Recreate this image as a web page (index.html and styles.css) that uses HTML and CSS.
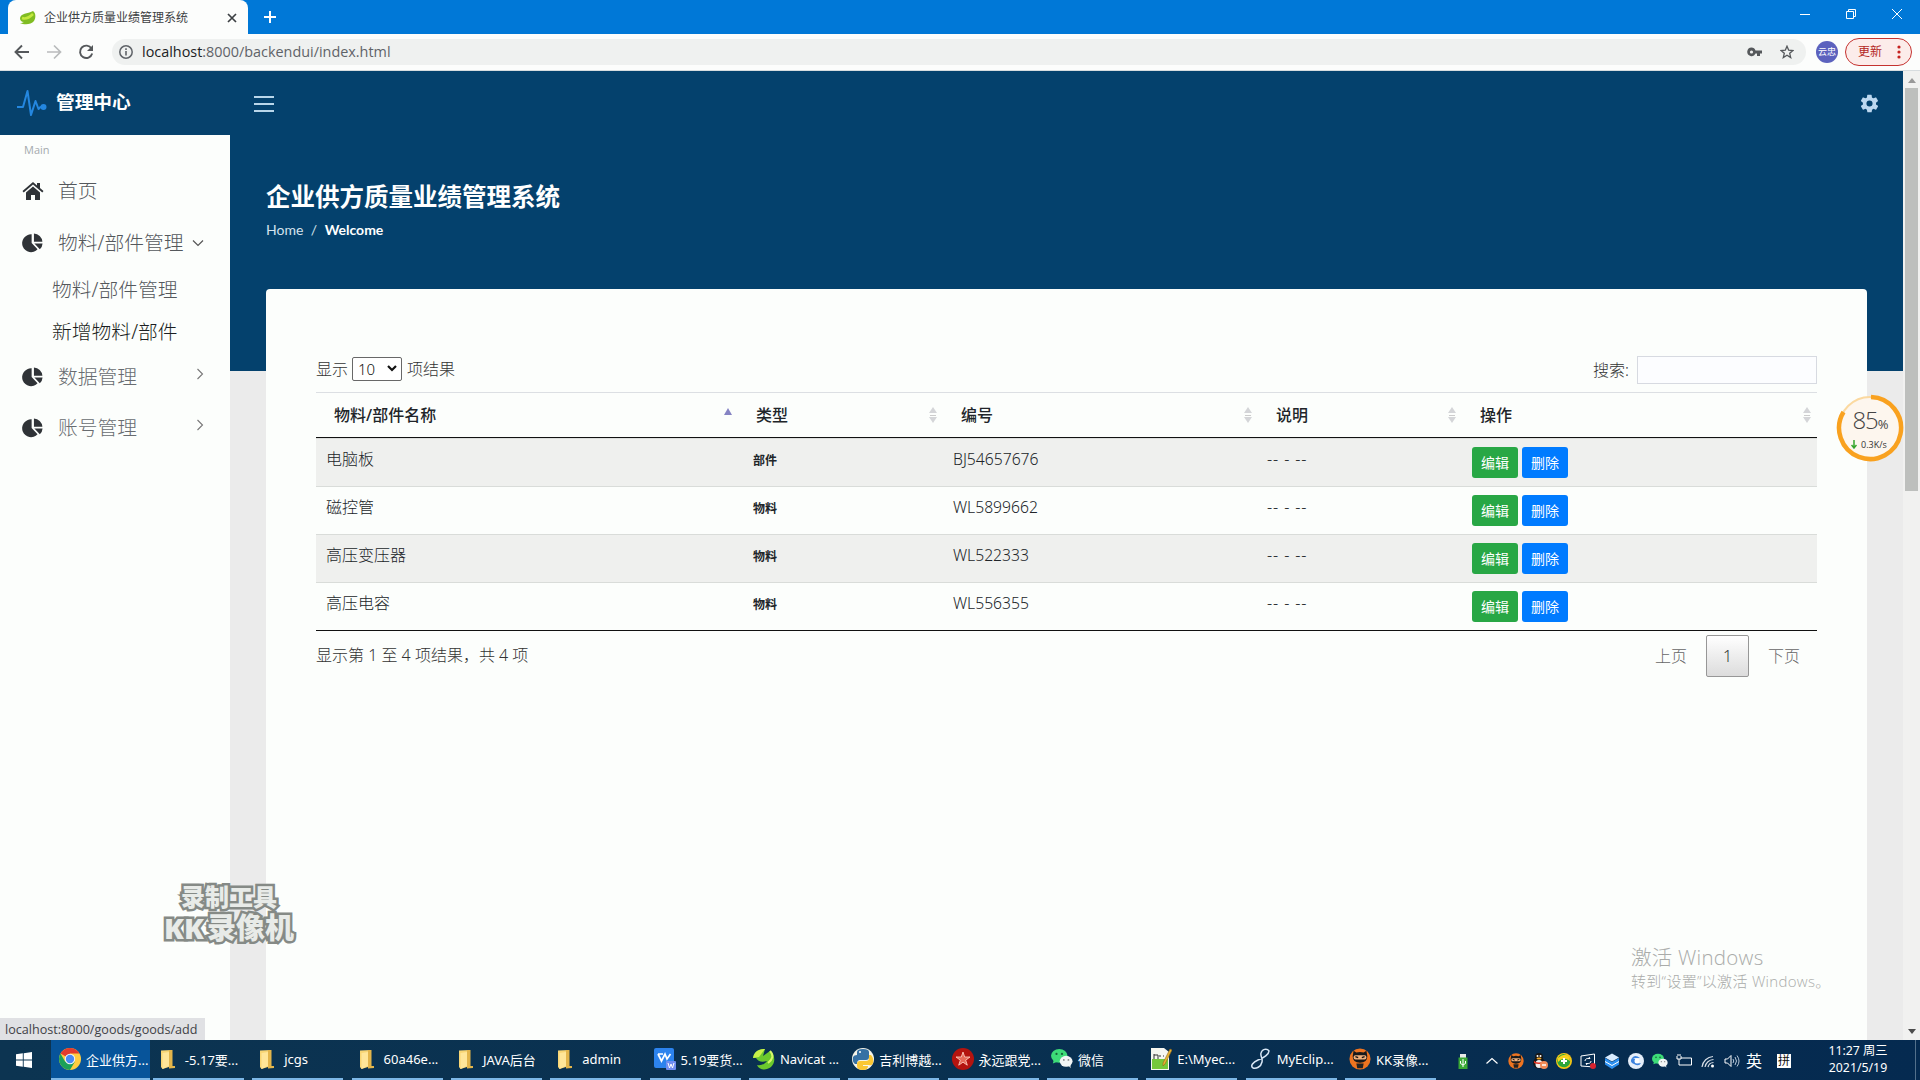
FILE: index.html
```html
<!DOCTYPE html>
<html lang="zh-CN">
<head>
<meta charset="utf-8">
<title>企业供方质量业绩管理系统</title>
<link rel="stylesheet" href="styles.css">
</head>
<body>
<svg class="defs" width="0" height="0">
  <symbol id="pie" viewBox="0 0 22 22"><path d="M9.5 1.5V11l6.5 7A9.8 9.8 0 1 1 9.5 1.500Z"/><path d="M12 .6A9.600 9.600 0 0 1 21.300 9.500H12Z"/><path d="M12.500 11.500H21.500A9.500 9.500 0 0 1 18.500 18Z"/></symbol>
  <symbol id="right" viewBox="0 0 12 12"><path d="M3.500 1 8.500 6 3.500 11" fill="none" stroke="#777" stroke-width="1.100"/></symbol>
  <symbol id="folder" viewBox="0 0 20 22"><path d="M2 2.500 13 2V18L3.500 21 2 19Z" fill="#f8d675"/><path d="M10 2H13.500V18H16V20L10 20.500Z" fill="#e3b54b"/><path d="M3.500 5 10 4V18L3.500 21Z" fill="#ffe699"/></symbol>
  <symbol id="wechat" viewBox="0 0 24 24"><ellipse cx="9" cy="8.500" rx="9" ry="7.500" fill="#3ddc78"/><path d="m3 13-1 4 5-2Z" fill="#3ddc78"/><circle cx="6" cy="6.500" r="1.200" fill="#17643a"/><circle cx="12" cy="6.500" r="1.200" fill="#17643a"/><ellipse cx="16.500" cy="14.500" rx="7" ry="6" fill="#f2f5f5"/><path d="m19 19 2.500 3-.5-4Z" fill="#f2f5f5"/><circle cx="14" cy="13" r="1" fill="#888"/><circle cx="19" cy="13" r="1" fill="#888"/></symbol>
  <symbol id="ninja" viewBox="0 0 24 24"><circle cx="12" cy="12" r="11.500" fill="#ee7420"/><path d="M5 3l3 2q4-1.500 8 0l3-2 1 6q0 7-8 7T4 9Z" fill="#17191b"/><rect x="5" y="8" width="14" height="4.500" rx="2" fill="#f0b07c"/><path d="m7 9.500 3 1M17 9.500l-3 1" stroke="#111" stroke-width="1.500"/><path d="M8 17h8l-1 5H9Z" fill="#222"/></symbol>
</svg>

<header class="tabstrip">
  <div class="tab">
    <svg width="16" height="16" viewBox="0 0 16 16"><path d="M0 8C1 3 7 4 13 1c3 2 3 7 1 10-3 4-10 4-14 2 2 0 3-.5 4-1-3 0-4-2-4-4Z" fill="#80bc22"/><path d="M2 8c4 1.500 8-1 11-4" stroke="#c3e83d" stroke-width="2.500" fill="none"/></svg>
    <span class="tab-title">企业供方质量业绩管理系统</span>
    <svg class="tab-close" width="10" height="10" viewBox="0 0 10 10"><path d="m1 1 8 8M9 1 1 9" stroke="#3c4043" stroke-width="1.700"/></svg>
  </div>
  <svg class="newtab" width="12" height="12" viewBox="0 0 12 12"><path d="M6 0v12M0 6h12" stroke="#fff" stroke-width="2"/></svg>
  <div class="winctl">
    <svg width="12" height="12" viewBox="0 0 12 12"><path d="M1 6.500h10" stroke="#fff"/></svg>
    <svg width="12" height="12" viewBox="0 0 12 12"><path d="M1.500 3.500h7v7h-7ZM3.500 3.500v-2h7v7h-2" fill="none" stroke="#fff"/></svg>
    <svg width="12" height="12" viewBox="0 0 12 12"><path d="m1 1 10 10M11 1 1 11" stroke="#fff"/></svg>
  </div>
</header>

<div class="toolbar">
  <div class="nav">
    <svg width="16" height="16" viewBox="0 0 16 16"><path d="M15 8H2M8 1.500 1.500 8 8 14.500" fill="none" stroke="#55585b" stroke-width="1.900"/></svg>
    <svg width="16" height="16" viewBox="0 0 16 16"><path d="M1 8h13M8 1.500 14.500 8 8 14.500" fill="none" stroke="#b9bbbc" stroke-width="1.700"/></svg>
    <svg width="16" height="16" viewBox="0 0 16 16"><path d="M13.500 4.500A6.200 6.200 0 1 0 14.200 9.500" fill="none" stroke="#55585b" stroke-width="1.900"/><path d="M15 1v6H9Z" fill="#55585b"/></svg>
  </div>
  <div class="omnibox">
    <svg width="14" height="14" viewBox="0 0 14 14"><circle cx="7" cy="7" r="6.200" fill="none" stroke="#5f6368" stroke-width="1.500"/><path d="M7 6v4.500M7 3.300v1.600" stroke="#5f6368" stroke-width="1.600"/></svg>
    <span class="url"><b>localhost</b>:8000/backendui/index.html</span>
    <svg class="key" width="15" height="10" viewBox="0 0 15 10"><path d="M4.500.5a4.300 4.300 0 1 0 4 6H10v2.500h3V6.500h2v-3H8.500a4.300 4.300 0 0 0-4-3Z" fill="#55585b"/><circle cx="4.500" cy="5" r="1.600" fill="#eff0ef"/></svg>
    <svg class="star" width="14" height="14" viewBox="0 0 14 14"><path d="m7 1.200 1.700 4 4.200.3-3.200 2.800 1 4.200L7 10.200l-3.700 2.300 1-4.200L1.100 5.500l4.200-.3Z" fill="none" stroke="#55585b" stroke-width="1.300"/></svg>
  </div>
  <span class="avatar">云忠</span>
  <div class="update"><span>更新</span><svg width="4" height="14" viewBox="0 0 4 14"><g fill="#c5221f"><circle cx="2" cy="2" r="1.600"/><circle cx="2" cy="7" r="1.600"/><circle cx="2" cy="12" r="1.600"/></g></svg></div>
</div>

<div class="viewport">
  <aside class="sidebar">
    <div class="brand">
      <svg width="31" height="28" viewBox="0 0 31 28"><path d="M1 18H7L11.500 2 15 26 19.500 12 22.500 20 25 17.500" fill="none" stroke="#2487e0" stroke-width="2" stroke-linejoin="round"/><circle cx="27.500" cy="18" r="3" fill="#2487e0"/></svg>
      <strong>管理中心</strong>
    </div>
    <div class="menu-label">Main</div>
    <ul class="menu">
      <li><svg class="micon" viewBox="0 0 22 20"><path d="M.5 10 11 1l4 3.400V2h3v5l3.500 3-1.200 1.400L11 3.600 1.700 11.400Z"/><path d="M4 11.500 11 5.500l7 6V19h-5v-5H9v5H4Z"/></svg><span>首页</span></li>
      <li><svg class="micon"><use href="#pie"/></svg><span>物料/部件管理</span><svg class="down" width="12" height="12" viewBox="0 0 12 12"><path d="m1 3.500 5 5 5-5" fill="none" stroke="#555" stroke-width="1.200"/></svg></li>
    </ul>
    <ul class="submenu">
      <li>物料/部件管理</li>
      <li class="hover">新增物料/部件</li>
    </ul>
    <ul class="menu dim">
      <li><svg class="micon"><use href="#pie"/></svg><span>数据管理</span><svg class="right" width="12" height="12"><use href="#right"/></svg></li>
      <li><svg class="micon"><use href="#pie"/></svg><span>账号管理</span><svg class="right" width="12" height="12"><use href="#right"/></svg></li>
    </ul>
  </aside>

  <main class="content">
    <div class="topbar">
      <span class="burger"><i></i><i></i><i></i></span>
      <svg width="21" height="21" viewBox="0 0 24 24"><path d="M19.400 13a7.500 7.500 0 0 0 0-2l2.100-1.700a.5.5 0 0 0 .1-.6l-2-3.500a.5.5 0 0 0-.6-.2l-2.500 1a7.300 7.300 0 0 0-1.700-1L14.400 2.400a.5.5 0 0 0-.5-.4h-4a.5.5 0 0 0-.5.400L9.100 5a7.700 7.700 0 0 0-1.700 1l-2.500-1a.5.5 0 0 0-.6.200l-2 3.500a.5.5 0 0 0 .1.600L4.500 11a7.900 7.900 0 0 0 0 2l-2.100 1.700a.5.5 0 0 0-.1.600l2 3.500c.1.200.4.300.6.200l2.500-1a7.300 7.300 0 0 0 1.700 1l.4 2.600c0 .2.200.4.500.4h4c.2 0 .5-.2.500-.4l.4-2.600a7.700 7.700 0 0 0 1.700-1l2.500 1c.2.100.5 0 .6-.2l2-3.500a.5.500 0 0 0-.1-.6ZM12 15.500a3.500 3.500 0 1 1 0-7 3.500 3.500 0 0 1 0 7Z" fill="#bdd8f0"/></svg>
    </div>
    <h1>企业供方质量业绩管理系统</h1>
    <div class="crumbs"><span>Home</span><span>/</span><b>Welcome</b></div>
    <section class="card">
      <div class="controls">
        <span>显示</span>
        <span class="select">10<svg width="10" height="7" viewBox="0 0 10 7"><path d="m1 1 4 4 4-4" fill="none" stroke="#111" stroke-width="2.200"/></svg></span>
        <span>项结果</span>
        <label class="search">搜索:<input type="text"></label>
      </div>
      <table>
        <colgroup><col class="c1"><col class="c2"><col class="c3"><col class="c4"><col class="c5"></colgroup>
        <thead><tr>
          <th class="asc"><div>物料/部件名称<i class="sort"></i></div></th>
          <th><div>类型<i class="sort"></i></div></th>
          <th><div>编号<i class="sort"></i></div></th>
          <th><div>说明<i class="sort"></i></div></th>
          <th><div>操作<i class="sort"></i></div></th>
        </tr></thead>
        <tbody>
          <tr><td>电脑板</td><td><b class="badge">部件</b></td><td>BJ54657676</td><td class="note">-- - --</td><td><div class="actions"><a class="btn edit">编辑</a><a class="btn del">删除</a></div></td></tr>
          <tr><td>磁控管</td><td><b class="badge">物料</b></td><td>WL5899662</td><td class="note">-- - --</td><td><div class="actions"><a class="btn edit">编辑</a><a class="btn del">删除</a></div></td></tr>
          <tr><td>高压变压器</td><td><b class="badge">物料</b></td><td>WL522333</td><td class="note">-- - --</td><td><div class="actions"><a class="btn edit">编辑</a><a class="btn del">删除</a></div></td></tr>
          <tr><td>高压电容</td><td><b class="badge">物料</b></td><td>WL556355</td><td class="note">-- - --</td><td><div class="actions"><a class="btn edit">编辑</a><a class="btn del">删除</a></div></td></tr>
        </tbody>
      </table>
      <div class="table-foot">
        <span class="info">显示第 1 至 4 项结果，共 4 项</span>
        <div class="pager"><span>上页</span><span class="page">1</span><span>下页</span></div>
      </div>
    </section>
  </main>

  <div class="scrollbar"><i class="up"></i><div class="thumb"></div><i class="dn"></i></div>

  <div class="status">localhost:8000/goods/goods/add</div>
  <div class="recorder"><div class="r1">录制工具</div><div class="r2"><span>KK</span><span>录像机</span></div></div>
  <div class="activate"><div class="a1">激活 Windows</div><div class="a2">转到“设置”以激活 Windows。</div></div>
  <div class="gauge">
    <svg width="68" height="68" viewBox="0 0 68 68"><circle cx="34" cy="34" r="31" fill="#fdf6ee" stroke="#fbd9a0" stroke-width="2"/><path d="M35 3A31 31 0 1 1 7.500 18" fill="none" stroke="#f9a11f" stroke-width="4.500"/></svg>
    <div class="pct">85<small>%</small></div>
    <div class="rate"><svg width="6" height="9" viewBox="0 0 6 9"><path d="M3 0v8M.5 5 3 8l2.500-3" fill="none" stroke="#35a52c" stroke-width="1.500"/></svg>0.3K/s</div>
  </div>
</div>

<footer class="taskbar">
  <div class="start"><svg width="16" height="16" viewBox="0 0 16 16"><path d="M0 2.300 6.800 1.300V7.500H0ZM7.700 1.200 16 0V7.500H7.700ZM0 8.400H6.800V14.700L0 13.700ZM7.700 8.400H16V16L7.700 14.800Z" fill="#fff"/></svg></div>
  <div class="tasks">
    <div class="task big active"><svg viewBox="0 0 22 22"><circle cx="11" cy="11" r="11" fill="#ffcd40"/><path d="M11 11 1.500 5.500A11 11 0 0 1 20.500 5.500H11Z" fill="#e33b2e"/><path d="M1.500 5.500A11 11 0 0 0 11 22l4.800-8.200L11 11 6.200 13.800Z" fill="#1ba05a"/><circle cx="11" cy="11" r="5.200" fill="#f5f5f5"/><circle cx="11" cy="11" r="4.200" fill="#4a8af4"/></svg><span>企业供方...</span></div>
    <div class="task"><svg><use href="#folder"/></svg><span>-5.17要...</span></div>
    <div class="task"><svg><use href="#folder"/></svg><span>jcgs</span></div>
    <div class="task"><svg><use href="#folder"/></svg><span>60a46e...</span></div>
    <div class="task"><svg><use href="#folder"/></svg><span>JAVA后台</span></div>
    <div class="task"><svg><use href="#folder"/></svg><span>admin</span></div>
    <div class="task big"><svg viewBox="0 0 22 22"><rect width="20" height="20" rx="2" fill="#2c83ee"/><path d="m4 6 3.500 7L11 6l2 5 3.500-5M4 6h5" fill="none" stroke="#fff" stroke-width="1.700"/><rect x="12" y="13" width="10" height="9" rx="1" fill="#6f8df0"/><path d="m14 15 1.500 5 1.500-4 1.500 4 1.500-5" fill="none" stroke="#fff"/></svg><span>5.19要货...</span></div>
    <div class="task big"><svg viewBox="0 0 22 22"><path d="M0 10C1 4 5 1 12 1l-2 7 7-5c5 4 6 11 1 16-5 4-12 3-14-2 4 1 8-1 10-4-6 2-9 0-11-3Z" fill="#6cc92d"/><path d="M12 1 6 9l-6 1C1 4 5 1 12 1Z" fill="#c8f04a"/><path d="M17 3c4 4 3 8-2 12" stroke="#d5f769" stroke-width="2" fill="none"/></svg><span>Navicat ...</span></div>
    <div class="task big"><svg viewBox="0 0 22 22"><circle cx="11" cy="11" r="11" fill="#f6f4e8"/><path d="M5 7V4q0-3 6-3t6 3v5q0 3-3 3H8q-3 0-3 4H3Q0 14 1 9q1-2 4-2h6" fill="#3671a4"/><path d="M17 10V7h2q3 3 2 8-1 3-4 2h-6v1h5q0 4-5 4-6 0-6-4v-2q0-3 3-3h6q3 0 3-3Z" fill="#fac733"/><circle cx="8" cy="4" r="1" fill="#fff"/></svg><span>吉利博越...</span></div>
    <div class="task big"><svg viewBox="0 0 22 22"><circle cx="11" cy="11" r="11" fill="#b4140f"/><path d="m11 4 1.700 5H18l-4.300 3.200 1.600 5L11 14.200 6.700 17.200l1.600-5L4 9h5.300Z" fill="#e76a58" stroke="#ffd5c8" stroke-width=".8"/></svg><span>永远跟党...</span></div>
    <div class="task big"><svg><use href="#wechat"/></svg><span>微信</span></div>
    <div class="task big"><svg viewBox="0 0 22 22"><path d="M1 0h13l5 4v18H1Z" fill="#f5f6f0"/><path d="M2 11h16v10H2Z" fill="#75c83c"/><path d="M4 6v5M4 7h4v4M9 8h2M13 8h1" stroke="#333" fill="none"/><path d="m20 1 2 1-7 14-2 2V15Z" fill="#e7b534" stroke="#946516" stroke-width=".6"/></svg><span>E:\Myec...</span></div>
    <div class="task big"><svg viewBox="0 0 22 22"><path d="M19 3C17 0 12 1 11 5c-1 3 2 5 1 9-1 5-6 7-9 6-3-2 0-6 5-8 6-2 11-6 11-9Z" fill="none" stroke="#d8e6f5" stroke-width="1.500"/></svg><span>MyEclip...</span></div>
    <div class="task big"><svg><use href="#ninja"/></svg><span>KK录像...</span></div>
  </div>
  <div class="tray">
    <svg viewBox="0 0 16 16"><path d="M5 1h6v4H5Z" fill="#e8eae8"/><path d="M3.500 4.500h9V16h-9Z" fill="#3aa935"/><path d="M8 6v8M5.500 8v2.500L8 12l2.500-1.500V8" stroke="#fff" fill="none"/></svg>
    <svg class="w5" viewBox="0 0 16 16"><path d="m2.500 10.500 5.500-5 5.500 5" stroke="#fff" stroke-width="1.200" fill="none"/></svg>
    <svg viewBox="0 0 24 24"><use href="#ninja"/></svg>
    <svg viewBox="0 0 16 16"><ellipse cx="7" cy="10" rx="6" ry="5.500" fill="#171717"/><ellipse cx="7" cy="4" rx="4" ry="4" fill="#171717"/><ellipse cx="7" cy="11" rx="3.500" ry="4" fill="#f0eeee"/><path d="M2 8q5 3 10 0v2q-5 2-10 0Z" fill="#e43121"/><ellipse cx="7" cy="5.500" rx="2.500" ry="1" fill="#f5a623"/><circle cx="5.500" cy="3" r="1" fill="#fff"/><circle cx="8.500" cy="3" r="1" fill="#fff"/><circle cx="12" cy="12" r="4" fill="#f08a56"/><path d="M10 12h4" stroke="#fff" stroke-width="1.500"/></svg>
    <svg viewBox="0 0 16 16"><circle cx="8" cy="8" r="8" fill="#f5c515"/><path d="M8 1a7 7 0 0 0-6 10q3 4 8 3 5-2 4-7Q12 2 8 1Z" fill="#2da63a"/><path d="M2 5q7-6 11-1l1 4q-7-5-12 1Z" fill="#f6d21d"/><path d="M8 5v6M5 8h6" stroke="#fff" stroke-width="2"/></svg>
    <svg viewBox="0 0 16 16"><path d="M1 3 14.500 1v13L1 13Z" fill="none" stroke="#fff"/><path d="M5 8q0-3 5-2.500L9 4M11 8q0 3-5 2.500L7 12" fill="none" stroke="#fff"/><circle cx="13" cy="13" r="3" fill="#d8232f"/></svg>
    <svg viewBox="0 0 16 16"><path d="m1 4.500 7-4 7 4-7 4Z" fill="#d9ecff"/><path d="m1 5 7 4 7-4v6.500L8 16l-7-4.500Z" fill="#2b8ff0"/><path d="m1 8.500 7 4 7-4" fill="none" stroke="#fff"/></svg>
    <svg viewBox="0 0 16 16"><circle cx="8" cy="8" r="8" fill="#e5eefa"/><path d="M12 5Q7 1 4 5t2 6q5 3 7-1-4 1-5-1 0-4-4-4" fill="#3d83df"/><circle cx="9" cy="8" r="2.500" fill="#fff"/></svg>
    <svg viewBox="0 0 24 24"><use href="#wechat"/></svg>
    <svg viewBox="0 0 16 16"><path d="M5 5h10.500v7H5M1 3v3h4V3M2 3V1M4 3V1M3 6v6h2" fill="none" stroke="#fff"/></svg>
    <svg viewBox="0 0 16 16"><path d="M2 14A12 12 0 0 1 13 3.500M5 14a9 9 0 0 1 8.500-7.500M8 14a6 6 0 0 1 5.500-4.500" fill="none" stroke="#d6dde6" stroke-width="1.200"/><circle cx="12.500" cy="13" r="1.500" fill="#fff"/></svg>
    <svg viewBox="0 0 16 16"><path d="M1 6h2.500L7 2.500v11L3.500 10H1Z" fill="none" stroke="#fff"/><path d="M9 6q1.500 2 0 4M11 4q3 4 0 8M13 2.500q4 5.500 0 11" fill="none" stroke="#b9c8d8"/></svg>
    <span class="ime">英</span><span class="pin">拼</span>
  </div>
  <div class="clock"><div>11:27 周三</div><div>2021/5/19</div></div>
  <i class="peek"></i>
</footer>
</body>
</html>
```
FILE: styles.css
```css
* { box-sizing: border-box; }
body { margin: 0; width: 1920px; height: 1080px; overflow: hidden; display: flex; flex-direction: column; font-family: "Noto Sans", "Noto Sans CJK SC", sans-serif; font-weight: 300; color: #212529; background: #fcfefc; }
svg { display: block; flex: none; }
.defs { position: absolute; }
ul { margin: 0; padding: 0; list-style: none; }
i { font-style: normal; }
b, strong { font-weight: 700; }

/* browser chrome */
.tabstrip { height: 34px; flex: none; display: flex; align-items: center; background: #0078d7; padding-left: 8px; }
.tab { width: 240px; height: 34px; background: #fcfdfc; border-radius: 8px 8px 0 0; display: flex; align-items: center; padding: 2px 11px 0 12px; gap: 8px; }
.tab-title { font-size: 12px; line-height: 20px; font-weight: 400; color: #3c4043; white-space: nowrap; flex: 1; }
.newtab { margin-left: 16px; }
.winctl { margin-left: auto; display: flex; gap: 34px; padding-right: 17px; margin-top: -6px; }
.toolbar { height: 37px; flex: none; display: flex; align-items: center; border-bottom: 1px solid #d7dcdf; padding: 0 8px 0 14px; background: #fcfdfc; }
.nav { display: flex; gap: 16px; width: 98px; }
.omnibox { width: 1694px; height: 26px; border-radius: 13px; background: #eff1f0; display: flex; align-items: center; padding: 0 12px 0 7px; }
.url { font-size: 14.400px; line-height: 24px; margin-left: 9px; color: #5f6368; white-space: nowrap; font-weight: 400; font-family: "Open Sans", sans-serif; }
.url b { color: #202124; font-weight: 400; }
.key { margin-left: auto; }
.star { margin-left: 18px; }
.avatar { width: 22px; height: 22px; border-radius: 50%; background: #5c62be; color: #fff; font-size: 9px; font-weight: 400; line-height: 22px; text-align: center; margin-left: 10px; flex: none; }
.update { width: 67px; height: 28px; margin-left: 7px; border: 1px solid #c5322f; border-radius: 14px; background: #fcecea; color: #b3261e; font-size: 12px; font-weight: 400; line-height: 26px; display: flex; align-items: center; padding: 0 10px 0 12px; justify-content: space-between; }

/* page */
.viewport { height: 969px; flex: none; display: flex; position: relative; }
.sidebar { width: 230px; background: #fcfefc; }
.brand { height: 64px; background: #06416c; display: flex; align-items: center; padding-left: 16px; color: #fff; }
.brand strong { font-size: 18.700px; line-height: 28px; margin: -3px 0 0 9px; }
.menu-label { font-size: 11px; line-height: 16px; color: #a4aaae; padding: 7px 0 0 24px; height: 30px; font-weight: 400; font-family: "Open Sans", sans-serif; }
.menu li { height: 52px; display: flex; align-items: center; padding-left: 22px; font-size: 19.800px; line-height: 30px; color: #54585c; }
.micon { width: 22px; height: 20px; fill: #2f3337; margin-right: 14px; }
.down { margin-left: 8px; }
.right { margin: -6px 24px 0 auto; }
.submenu { padding: 0 0 0 52px; font-size: 19.800px; color: #54585c; }
.submenu li { height: 42px; line-height: 41px; }
.submenu .hover { color: #1b1e21; }
.menu.dim { margin-top: -2px; }
.menu.dim li { color: #686c70; height: 51px; }
.content { width: 1673px; padding: 0 36px; background: linear-gradient(#04416d 300px, #ebebeb 300px); display: flex; flex-direction: column; }
.topbar { height: 64px; margin: 0 -12px; display: flex; align-items: center; justify-content: space-between; padding: 1px 0 0; }
.topbar svg { margin-right: -1px; }
.burger { width: 20px; display: flex; flex-direction: column; gap: 5px; }
.burger i { height: 2px; background: #b9d6ea; }
h1 { margin: 45px 0 0; font-size: 24.500px; line-height: 34px; height: 34px; color: #fff; font-weight: 700; }
.crumbs { display: flex; gap: 7.500px; margin-top: 5px; height: 70px; font: 400 14px/20px Lato, sans-serif; color: #d4e3ee; padding-top: 1px; }
.crumbs b { color: #fff; }
.card { flex: 1; background: #fcfefc; border-radius: 4px 4px 0 0; padding: 66px 50px 0; font-size: 16px; }
.controls { display: flex; align-items: center; height: 28px; color: #333; white-space: nowrap; line-height: 24px; }
.select { width: 50px; height: 24px; margin: -1px 5px 0 4px; border: 1px solid #686868; border-radius: 2px; display: flex; align-items: center; justify-content: space-between; padding: 0 4px 0 5px; font-size: 15px; color: #111; background: #fff; }
.search { margin-left: auto; display: flex; align-items: center; padding-top: 2px; }
.search input { width: 180px; height: 28px; margin: 0 0 0 8px; border: 1px solid #d7dae1; background: #fcfdff; }
table { width: 1501px; margin-top: 9px; border-collapse: separate; border-spacing: 0; table-layout: fixed; }
.c1 { width: 422px; } .c2 { width: 205px; } .c3 { width: 315px; } .c4 { width: 204px; } .c5 { width: 355px; }
th { height: 46px; padding: 0 4px 0 18px; text-align: left; border-top: 1px solid #dcdfe3; border-bottom: 1px solid #111; font-weight: 500; }
th div { display: flex; align-items: center; justify-content: space-between; line-height: 24px; }
.sort { width: 12px; height: 16px; background: linear-gradient(#ccc, #ccc) 50% 50% / 6px 1px no-repeat; display: flex; flex-direction: column; justify-content: space-between; align-items: center; }
.sort::before { content: ""; border: 4px solid transparent; border-top: 0; border-bottom: 6px solid #d4d5d8; }
.sort::after { content: ""; border: 4px solid transparent; border-bottom: 0; border-top: 6px solid #d4d5d8; }
.asc .sort { background: none; padding-top: 1px; }
.asc .sort::before { border-bottom: 7px solid #8583c3; }
.asc .sort::after { visibility: hidden; }
td { height: 48px; padding: 8px 10px 0; vertical-align: top; line-height: 24px; border-bottom: 1px solid #d9dcd9; white-space: nowrap; }
td:nth-child(3) { font-size: 15.700px; }
tbody tr:nth-child(odd) { background: #eff0ee; }
tbody tr:first-child td { height: 49px; border-top: 1px solid #dcdedc; }
tbody tr:last-child td { border-bottom-color: #111; }
td.note { letter-spacing: .9px; padding-left: 9px; }
.badge { font-size: 12px; font-weight: 700; padding: 2px 0 0 5px; line-height: 24px; display: block; }
.actions { display: flex; gap: 4px; }
.btn { width: 46px; height: 31px; border-radius: 3px; color: #fff; font-size: 14px; line-height: 31px; font-weight: 400; text-align: center; }
.edit { background: #28a745; } .del { background: #007bff; }
.table-foot { display: flex; justify-content: space-between; color: #333; }
.info { line-height: 24px; padding-top: 12px; }
.pager { display: flex; padding: 4px 17px 0 0; line-height: 42px; color: #666; }
.page { width: 43px; height: 42px; margin: 0 19px; border: 1px solid #979797; border-radius: 2px; background: linear-gradient(#fff, #dcdcdc); text-align: center; color: #333; line-height: 40px; }
.scrollbar { width: 17px; background: #f1f1f0; display: flex; flex-direction: column; align-items: center; }
.up { border: 4px solid transparent; border-top-width: 7px; border-bottom: 5px solid #999; height: 12px; margin-bottom: 5px; }
.thumb { width: 13px; height: 403px; background: #bdbfbd; }
.dn { margin-top: auto; border: 4px solid transparent; border-bottom: 0; border-top: 5px solid #4c4c4c; margin-bottom: 6px; }

/* overlays */
.status { position: absolute; left: 0; bottom: 0; width: 205px; height: 22px; background: #e0e1e4; color: #3f4246; font: 400 12.600px/22px "Open Sans", sans-serif; padding-left: 5px; padding-top: 1px; white-space: nowrap; }
.recorder { position: absolute; left: 159px; top: 810px; width: 140px; text-align: center; font-weight: 900; color: #e8ebe8; -webkit-text-stroke: 5px #858a86; paint-order: stroke fill; white-space: nowrap; }
.r1 { font-size: 24px; line-height: 31px; }
.r2 { font-size: 29px; line-height: 31px; display: flex; justify-content: center; gap: 3px; }
.activate { position: absolute; left: 1631px; top: 870px; color: #aaacaa; white-space: nowrap; font-family: "Open Sans", "Noto Sans CJK SC", sans-serif; }
.a1 { font-size: 20.500px; line-height: 32px; letter-spacing: .25px; }
.a2 { font-size: 15px; line-height: 16px; letter-spacing: .3px; }
.gauge { position: absolute; left: 1836px; top: 323px; width: 68px; height: 68px; }
.gauge > svg { position: absolute; }
.pct { position: relative; text-align: center; font-size: 24px; line-height: 30px; padding-top: 11px; letter-spacing: -1px; color: #444; font-family: "Open Sans", sans-serif; }
.pct small { font-size: 13px; font-weight: 400; }
.rate { position: relative; display: flex; justify-content: center; align-items: center; gap: 4px; margin-left: -2px; font: 400 9px/11px "Open Sans", sans-serif; color: #333; }

/* taskbar */
.taskbar { height: 40px; flex: none; display: flex; background: linear-gradient(90deg, #0c3451, #082f50 60%, #052a50); color: #fff; font-size: 14px; font-weight: 400; }
.start { width: 51px; display: flex; align-items: center; justify-content: center; padding-right: 4px; }
.tasks { display: flex; width: 1390px; gap: 8.350px; }
.task { width: 91px; height: 40px; flex: none; display: flex; align-items: center; padding-left: 6px; border-bottom: 2px solid #7db7e6; white-space: nowrap; font-size: 13px; }
.task svg { width: 20px; height: 22px; margin-right: 6px; }
.task.big { padding-left: 4px; }
.task.big svg { width: 22px; height: 22px; margin-right: 5px; }
.task.active { width: 99px; margin-right: -5.500px; padding-left: 8px; background: #07549a; }
.task.active svg { margin-right: 5px; }
.tray { display: flex; align-items: center; margin-left: 14px; width: 372px; padding-top: 1px; }
.tray svg { width: 16px; height: 16px; margin-right: 8px; }
.tray svg:first-child { margin-right: 13px; }
.ime { font-size: 16px; line-height: 24px; width: 16px; margin-left: -2px; }
.pin { background: #fff; color: #111; width: 14px; height: 14px; line-height: 14px; font-size: 12px; text-align: center; margin-left: 15px; }
.clock { width: 84px; text-align: center; font-size: 12.300px; line-height: 17px; padding-top: 2px; margin-left: -11px; }
.peek { width: 1px; background: #53708b; margin-left: auto; margin-right: 4px; }
```
